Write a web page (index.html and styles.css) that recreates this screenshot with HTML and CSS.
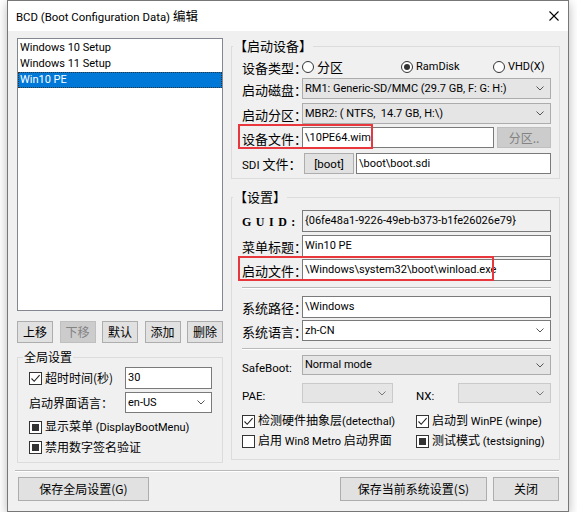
FILE: index.html
```html
<!DOCTYPE html>
<html>
  <head>
    <meta charset="utf-8">
    <link rel="stylesheet" href="styles.css">
  </head>
  <body>
    <div class="window">
      <div class="titlebar">
        <span class="title">BCD (Boot Configuration Data) <span class="cjk">编辑</span></span>
        <svg class="close" width="10" height="10" viewBox="0 0 10 10"><path d="M0.5 0.5 L9.5 9.5 M9.5 0.5 L0.5 9.5" stroke="#000" stroke-width="1.1" fill="none"/></svg>
      </div>
      <div class="client">
        <div class="columns">
          <div class="left">
            <div class="listbox">
              <div class="item">Windows 10 Setup</div>
              <div class="item">Windows 11 Setup</div>
              <div class="item selected">Win10 PE</div>
            </div>
            <div class="btn-row">
              <div class="btn">上移</div>
              <div class="btn disabled">下移</div>
              <div class="btn">默认</div>
              <div class="btn">添加</div>
              <div class="btn">删除</div>
            </div>
            <fieldset class="group global">
              <legend>全局设置</legend>
              <div class="body">
                <div class="row r1">
                  <div class="check lbl-wide"><span class="cb checked"><svg width="11" height="11" viewBox="0 0 11 11"><path d="M1.5 5.5 L4.2 8.3 L9.6 2.2" stroke="#222" stroke-width="1.1" fill="none"/></svg></span><span>超时时间(秒)</span></div>
                  <div class="field">30</div>
                </div>
                <div class="row r2">
                  <div class="lbl-wide">启动界面语言：</div>
                  <div class="field combo">en-US<svg class="arrow" width="8" height="5" viewBox="0 0 8 5"><path d="M0.5 0.5 L4 4 L7.5 0.5" stroke="#555" fill="none"/></svg></div>
                </div>
                <div class="check r3"><span class="cb mixed"></span><span>显示菜单 <span class="en">(DisplayBootMenu)</span></span></div>
                <div class="check r4"><span class="cb mixed"></span><span>禁用数字签名验证</span></div>
              </div>
            </fieldset>
          </div>

          <div class="right">
            <fieldset class="group device">
              <legend>【启动设备】</legend>
              <div class="body">
                <div class="row d1">
                  <div class="lbl">设备类型：</div>
                  <div class="radio w1"><span class="rb"></span><span>分区</span></div>
                  <div class="radio w2"><span class="rb on"></span><span class="en">RamDisk</span></div>
                  <div class="radio"><span class="rb"></span><span class="en">VHD(X)</span></div>
                </div>
                <div class="row d2">
                  <div class="lbl">启动磁盘：</div>
                  <div class="field combo gray">RM1: Generic-SD/MMC (29.7 GB, F: G: H:)<svg class="arrow" width="8" height="5" viewBox="0 0 8 5"><path d="M0.5 0.5 L4 4 L7.5 0.5" stroke="#555" fill="none"/></svg></div>
                </div>
                <div class="row d3">
                  <div class="lbl">启动分区：</div>
                  <div class="field combo gray">MBR2: ( NTFS,&nbsp; 14.7 GB, H:\)<svg class="arrow" width="8" height="5" viewBox="0 0 8 5"><path d="M0.5 0.5 L4 4 L7.5 0.5" stroke="#555" fill="none"/></svg></div>
                </div>
                <div class="row d4">
                  <div class="lbl">设备文件：</div>
                  <div class="field">\10PE64.wim</div>
                  <div class="btn disabled part-btn">分区..</div>
                  <div class="mark mark-1"></div>
                </div>
                <div class="row d5">
                  <div class="lbl"><span class="en">SDI</span> 文件：</div>
                  <div class="btn boot-btn"><span class="en">[boot]</span></div>
                  <div class="field">\boot\boot.sdi</div>
                </div>
              </div>
            </fieldset>

            <fieldset class="group settings">
              <legend>【设置】</legend>
              <div class="body">
                <div class="row s1">
                  <div class="lbl guid">GUID:</div>
                  <div class="field readonly">{06fe48a1-9226-49eb-b373-b1fe26026e79}</div>
                </div>
                <div class="row s2">
                  <div class="lbl">菜单标题：</div>
                  <div class="field">Win10 PE</div>
                </div>
                <div class="row s3">
                  <div class="lbl">启动文件：</div>
                  <div class="field">\Windows\system32\boot\winload.exe</div>
                  <div class="mark mark-2"></div>
                </div>
                <div class="sep s-sep1"></div>
                <div class="row s4">
                  <div class="lbl">系统路径：</div>
                  <div class="field">\Windows</div>
                </div>
                <div class="row s5">
                  <div class="lbl">系统语言：</div>
                  <div class="field combo">zh-CN<svg class="arrow" width="8" height="5" viewBox="0 0 8 5"><path d="M0.5 0.5 L4 4 L7.5 0.5" stroke="#555" fill="none"/></svg></div>
                </div>
                <div class="sep s-sep2"></div>
                <div class="row s6">
                  <div class="lbl low en">SafeBoot:</div>
                  <div class="field combo gray">Normal mode<svg class="arrow" width="8" height="5" viewBox="0 0 8 5"><path d="M0.5 0.5 L4 4 L7.5 0.5" stroke="#555" fill="none"/></svg></div>
                </div>
                <div class="row s7">
                  <div class="lbl low en">PAE:</div>
                  <div class="field combo off pae"><svg class="arrow" width="8" height="5" viewBox="0 0 8 5"><path d="M0.5 0.5 L4 4 L7.5 0.5" stroke="#777" fill="none"/></svg></div>
                  <div class="lbl low en nx">NX:</div>
                  <div class="field combo off"><svg class="arrow" width="8" height="5" viewBox="0 0 8 5"><path d="M0.5 0.5 L4 4 L7.5 0.5" stroke="#777" fill="none"/></svg></div>
                </div>
                <div class="check-row c1">
                  <div class="check col1"><span class="cb checked"><svg width="11" height="11" viewBox="0 0 11 11"><path d="M1.5 5.5 L4.2 8.3 L9.6 2.2" stroke="#222" stroke-width="1.1" fill="none"/></svg></span><span>检测硬件抽象层<span class="en">(detecthal)</span></span></div>
                  <div class="check"><span class="cb checked"><svg width="11" height="11" viewBox="0 0 11 11"><path d="M1.5 5.5 L4.2 8.3 L9.6 2.2" stroke="#222" stroke-width="1.1" fill="none"/></svg></span><span>启动到 <span class="en">WinPE (winpe)</span></span></div>
                </div>
                <div class="check-row c2">
                  <div class="check col1"><span class="cb"></span><span>启用 <span class="en">Win8 Metro</span> 启动界面</span></div>
                  <div class="check"><span class="cb mixed"></span><span>测试模式 <span class="en">(testsigning)</span></span></div>
                </div>
              </div>
            </fieldset>
          </div>
        </div>

        <div class="sep footer-sep"></div>
        <div class="footer">
          <div class="btn save-global">保存全局设置(G)</div>
          <div class="spacer"></div>
          <div class="btn save-current">保存当前系统设置(S)</div>
          <div class="btn close-btn">关闭</div>
        </div>
      </div>
    </div>
  </body>
</html>
```

FILE: styles.css
```css
* {
    box-sizing: border-box;
}
body {
    margin: 0;
    background: #fff;
    font-family: "Noto Sans CJK SC", sans-serif;
    font-size: 12px;
    line-height: 16px;
    color: #000;
}

/* latin runs: narrower face, like the Segoe part of YaHei */
.en,
.field,
.item,
.title {
    font-family: Roboto, "Noto Sans CJK SC", sans-serif;
    font-size: 11px;
}

/* window frame */
.window {
    margin-left: 7px;
    width: 562px;
    height: 512px;
    border: 1px solid #777;
    background: #f0f0f0;
    box-shadow: 0 3px 10px rgba(0, 0, 0, 0.28);
    display: flex;
    flex-direction: column;
}
.titlebar {
    height: 30px;
    flex: none;
    background: #fff;
    display: flex;
    align-items: center;
    justify-content: space-between;
    padding: 0 9px 0 8px;
}
.title {
    font-size: 11.4px;
}
.title .cjk {
    font-family: "Noto Sans CJK SC", sans-serif;
    font-size: 12.5px;
}
.client {
    flex: 1;
    padding: 7px 8px 0 9px;
}
.columns {
    display: flex;
    gap: 8px;
}
.left {
    width: 206px;
    flex: none;
}
.right {
    width: 329px;
    flex: none;
}

/* list */
.listbox {
    height: 273px;
    border: 1px solid #828790;
    background: #fff;
    padding: 1px 0;
}
.item {
    height: 16px;
    padding-left: 2px;
    white-space: nowrap;
}
.item.selected {
    background: #0078d7;
    color: #fff;
    outline: 1px dotted #333;
    outline-offset: -1px;
}

/* buttons */
.btn {
    height: 22px;
    border: 1px solid #adadad;
    background: #e1e1e1;
    display: flex;
    align-items: center;
    justify-content: center;
    white-space: nowrap;
}
.btn.disabled {
    background: #cccccc;
    border-color: #bfbfbf;
    color: #838383;
}
.btn-row {
    display: flex;
    justify-content: space-between;
    margin-top: 10px;
}
.btn-row .btn {
    width: 36px;
}

/* group boxes */
.group {
    margin: 0;
    padding: 0;
    border: 1px solid #dcdcdc;
    min-width: 0;
}
.group legend {
    padding: 0 1px;
    height: 16px;
    line-height: 16px;
    margin-left: 1px;
    font-size: 13px;
}
.global {
    margin-top: 6px;
}
.global legend {
    margin-left: 5px;
    font-size: 12px;
}
.global .body {
    padding: 0 10px 7px 11px;
}
.device .body,
.settings .body {
    padding: 0 8px 4px 10px;
}
.settings {
    margin-top: 10px;
}
.settings .body {
    padding-bottom: 10px;
}

.row {
    display: flex;
    align-items: center;
    height: 21px;
    position: relative;
}
.lbl {
    width: 60px;
    flex: none;
    white-space: nowrap;
    padding-top: 2px;
    font-size: 13px;
}
.lbl.en {
    font-size: 11.5px;
}
.lbl .en {
    font-size: 11.5px;
}
.lbl.low {
    padding-top: 6px;
}
.lbl-wide {
    width: 96px;
    flex: none;
    white-space: nowrap;
}
.guid {
    font-family: "Liberation Serif", serif;
    font-weight: bold;
    font-size: 12px;
    letter-spacing: 4.5px;
}

.field {
    flex: 1;
    height: 100%;
    border: 1px solid #7a7a7a;
    background: #fff;
    padding-left: 2px;
    display: flex;
    align-items: center;
    white-space: nowrap;
    overflow: hidden;
    min-width: 0;
}
.field.readonly {
    background: #f0f0f0;
}
.combo {
    justify-content: space-between;
    padding-right: 6px;
}
.combo.gray {
    background: #e5e5e5;
    border-color: #acacac;
}
.combo.off {
    background: #e5e5e5;
    border-color: #cacaca;
    justify-content: flex-end;
}
.arrow {
    flex: none;
}

/* checks and radios */
.check {
    display: flex;
    align-items: center;
    gap: 3px;
    white-space: nowrap;
    height: 16px;
}
.cb {
    width: 13px;
    height: 13px;
    flex: none;
    border: 1px solid #333;
    background: #fff;
    display: flex;
    align-items: center;
    justify-content: center;
}
.cb.mixed::after {
    content: "";
    width: 7px;
    height: 7px;
    background: #333;
}
.radio {
    display: flex;
    align-items: center;
    gap: 3px;
    white-space: nowrap;
    font-size: 13px;
}
.radio.w1 {
    width: 99px;
}
.radio.w2 {
    width: 92px;
}
.rb {
    width: 12px;
    height: 12px;
    flex: none;
    border: 1px solid #333;
    border-radius: 50%;
    background: #fff;
    display: flex;
    align-items: center;
    justify-content: center;
}
.rb.on::after {
    content: "";
    width: 6px;
    height: 6px;
    border-radius: 50%;
    background: #333;
}

/* left group rows */
.global .r1 {
    height: 22px;
    margin-top: 2px;
}
.global .r2 {
    margin-top: 3px;
}
.global .r3 {
    margin-top: 6px;
}
.global .r4 {
    margin-top: 4px;
}

/* device rows */
.d1 {
    height: 20px;
    margin-top: 3px;
}
.d2 {
    margin-top: 1px;
}
.d3 {
    margin-top: 4px;
}
.d4 {
    margin-top: 3px;
}
.d5 {
    margin-top: 5px;
}
.part-btn {
    width: 54px;
    height: 21px;
    margin-left: 3px;
}
.boot-btn {
    width: 50px;
    height: 21px;
    margin: 0 2px;
}
.boot-btn .en {
    font-size: 11.5px;
}

/* settings rows */
.settings .row {
    height: 22px;
}
.s1 {
    margin-top: 5px;
}
.s2 {
    margin-top: 3px;
}
.s3 {
    margin-top: 2px;
}
.s-sep1 {
    margin-top: 6px;
}
.s4 {
    margin-top: 7px;
}
.settings .s5 {
    height: 21px;
    margin-top: 2px;
}
.s-sep2 {
    margin-top: 7px;
}
.settings .s6 {
    height: 20px;
    margin-top: 5px;
}
.settings .s7 {
    height: 20px;
    margin-top: 8px;
}
.pae {
    flex: none;
    width: 91px;
}
.nx {
    width: 42px;
    margin-left: 23px;
}
.check-row {
    display: flex;
}
.check-row .col1 {
    width: 174px;
}
.c1 {
    margin-top: 10px;
}
.c2 {
    margin-top: 4px;
}

/* etched lines */
.sep {
    height: 2px;
    border-top: 1px solid #b9b9b9;
    border-bottom: 1px solid #fff;
}
.footer-sep {
    margin: 7px 1px 0 -2px;
}

/* red annotation boxes */
.mark {
    position: absolute;
    border: 2px solid #e8383d;
    height: 25px;
    left: -4px;
    top: -3px;
}
.mark-1 {
    width: 135px;
}
.mark-2 {
    width: 256px;
}

.footer {
    display: flex;
    margin-top: 5px;
    padding-right: 1px;
}
.footer .btn {
    height: 24px;
}
.save-global {
    width: 131px;
    margin-left: 1px;
}
.spacer {
    flex: 1;
}
.save-current {
    width: 147px;
}
.close-btn {
    width: 66px;
    margin-left: 6px;
}
```
